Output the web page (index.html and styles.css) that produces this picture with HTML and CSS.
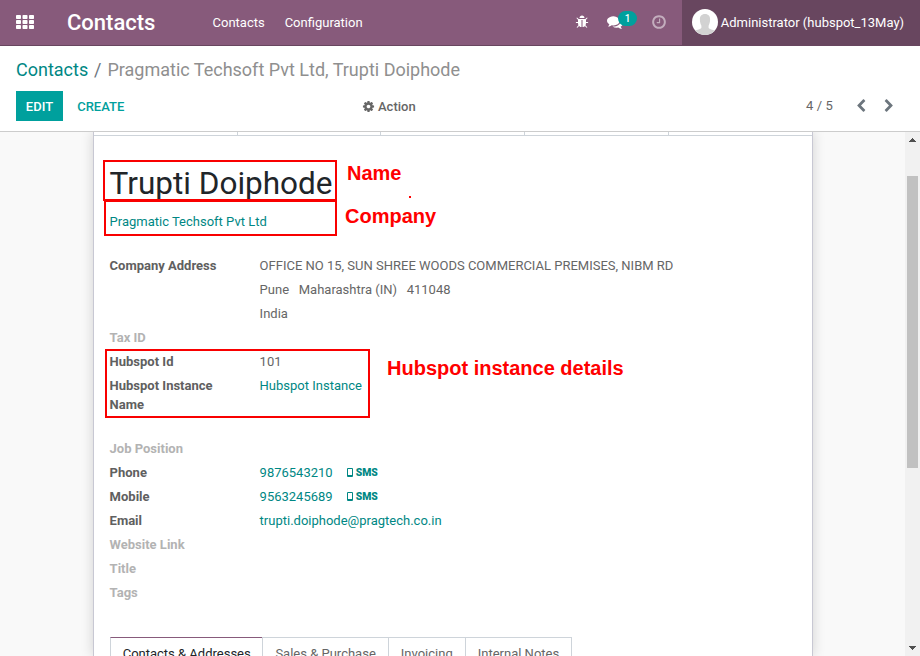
FILE: index.html
```html
<!DOCTYPE html>
<html lang="en">
<head>
<meta charset="utf-8">
<title>Contacts</title>
<link rel="stylesheet" href="styles.css">
</head>
<body>
<header class="navbar">
  <svg class="apps" viewBox="0 0 18 14"><g fill="#fff"><rect width="5" height="4" rx=".8"/><rect x="6.5" width="5" height="4" rx=".8"/><rect x="13" width="5" height="4" rx=".8"/><rect y="5" width="5" height="4" rx=".8"/><rect x="6.5" y="5" width="5" height="4" rx=".8"/><rect x="13" y="5" width="5" height="4" rx=".8"/><rect y="10" width="5" height="4" rx=".8"/><rect x="6.5" y="10" width="5" height="4" rx=".8"/><rect x="13" y="10" width="5" height="4" rx=".8"/></g></svg>
  <div class="brand">Contacts</div>
  <nav class="menu"><span>Contacts</span><span>Configuration</span></nav>
  <div class="systray">
    <svg class="bug" viewBox="0 0 1792 1792"><path d="M1696 960q0 26-19 45t-45 19h-224q0 171-67 290l208 209q19 19 19 45t-19 45q-18 19-45 19t-45-19l-198-197q-5 5-15 13t-42 28.500-65 36.500-82 29-97 13v-896h-128v896q-51 0-101.500-13.500t-87-33-66-39-43.500-32.500l-15-14-183 207q-20 21-48 21-24 0-43-16-19-18-20.500-44.500t15.500-46.500l202-227q-58-114-58-274h-224q-26 0-45-19t-19-45 19-45 45-19h224v-294l-173-173q-19-19-19-45t19-45 45-19 45 19l173 173h844l173-173q19-19 45-19t45 19 19 45-19 45l-173 173v294h224q26 0 45 19t19 45zm-480-576h-640q0-133 93.500-226.500t226.500-93.500 226.500 93.500 93.500 226.500z"/></svg>
    <div class="chat">
      <svg viewBox="0 0 1792 1792"><path d="M1408 768q0 139-94 257t-256.500 186.500-353.500 68.500q-86 0-176-16-124 88-278 128-36 9-86 16h-3q-11 0-20.500-8t-11.500-21q-1-3-1-6.500t.5-6.500 2-6l2.500-5 3.500-5.500 4-5 4.500-5 4-4.500q5-6 23-25t26-29.500 22.500-29 25-38.500 20.500-44q-124-72-195-177t-71-224q0-139 94-257t256.500-186.500 353.500-68.500 353.500 68.500 256.500 186.500 94 257zm384 256q0 120-71 224.500t-195 176.500q10 24 20.500 44t25 38.500 22.500 29 26 29.500 23 25q1 1 4 4.500t4.500 5 4 5 3.500 5.500l2.500 5 2 6 .5 6.500-1 6.500q-3 14-13 22t-22 7q-50-7-86-16-154-40-278-128-90 16-176 16-271 0-472-132 58 4 88 4 161 0 309-45t264-129q125-92 192-212t67-254q0-77-23-152 129 71 204 178t75 230z"/></svg>
      <span class="badge">1</span>
    </div>
    <svg class="clock" viewBox="0 0 1792 1792"><path d="M1024 544v448q0 14-9 23t-23 9h-320q-14 0-23-9t-9-23v-64q0-14 9-23t23-9h224v-352q0-14 9-23t23-9h64q14 0 23 9t9 23zm416 352q0-148-73-273t-198-198-273-73-273 73-198 198-73 273 73 273 198 198 273 73 273-73 198-198 73-273zm224 0q0 209-103 385.500t-279.500 279.500-385.500 103-385.500-103-279.500-279.500-103-385.500 103-385.500 279.500-279.500 385.500-103 385.500 103 279.500 279.500 103 385.500z"/></svg>
  </div>
  <div class="user">
    <svg class="avatar" viewBox="0 0 26 26"><defs><clipPath id="round"><circle cx="13" cy="13" r="13"/></clipPath></defs><g clip-path="url(#round)"><rect width="26" height="26" fill="#fff"/><path fill="#d2d2d2" d="M13 5c3.500 0 5.200 2.300 5.100 5.500 0 2.700-.8 4.800-1.500 6.200v2c0 1.600 6.400 2 7.900 4.300V26H1.500v-3c1.500-2.300 7.900-2.700 7.900-4.300v-2c-.8-1.400-1.500-3.500-1.500-6.200C7.800 7.300 9.500 5 13 5z"/></g></svg>
    <span>Administrator (hubspot_13May)</span>
  </div>
</header>
<section class="panel">
  <div class="crumbs"><span class="link">Contacts</span><span class="slash">/</span><span class="current">Pragmatic Techsoft Pvt Ltd, Trupti Doiphode</span></div>
  <div class="toolbar">
    <div class="buttons"><span class="edit">EDIT</span><span class="create">CREATE</span></div>
    <div class="action"><svg viewBox="0 0 1792 1792"><path d="M1152 896q0-106-75-181t-181-75-181 75-75 181 75 181 181 75 181-75 75-181zm512-109v222q0 12-8 23t-20 13l-185 28q-19 54-39 91 35 50 107 138 10 12 10 25t-9 23q-27 37-99 108t-94 71q-12 0-26-9l-138-108q-44 23-91 38-16 136-29 186-7 28-36 28h-222q-14 0-24.500-8.500t-11.500-21.500l-28-184q-49-16-90-37l-141 107q-10 9-25 9-14 0-25-11-126-114-165-168-7-10-7-23 0-12 8-23 15-21 51-66.500t54-70.500q-27-50-41-99l-183-27q-13-2-21-12.500t-8-23.500v-222q0-12 8-23t19-13l186-28q14-46 39-92-40-57-107-138-10-12-10-24 0-10 9-23 26-36 98.500-107.500t94.500-71.500q13 0 26 10l138 107q44-23 91-38 16-136 29-186 7-28 36-28h222q14 0 24.500 8.500t11.500 21.500l28 184q49 16 90 37l142-107q9-9 24-9 13 0 25 10 129 119 165 170 7 8 7 22 0 12-8 23-15 21-51 66.500t-54 70.500q26 50 41 98l183 28q13 2 21 12.500t8 23.500z"/></svg><span>Action</span></div>
    <div class="pager"><span class="count">4 / 5</span>
      <svg class="chev" viewBox="0 0 1792 1792"><path d="M1427 301l-531 531 531 531q19 19 19 45t-19 45l-166 166q-19 19-45 19t-45-19l-742-742q-19-19-19-45t19-45l742-742q19-19 45-19t45 19l166 166q19 19 19 45t-19 45z"/></svg>
      <svg class="chev next" viewBox="0 0 1792 1792"><path d="M1427 301l-531 531 531 531q19 19 19 45t-19 45l-166 166q-19 19-45 19t-45-19l-742-742q-19-19-19-45t19-45l742-742q19-19 45-19t45 19l166 166q19 19 19 45t-19 45z"/></svg>
    </div>
  </div>
</section>
<main class="content">
  <article class="sheet">
    <div class="statbar"><i></i><i></i><i></i><i></i><i></i></div>
    <div class="body">
      <h1>Trupti Doiphode</h1>
      <div class="company link">Pragmatic Techsoft Pvt Ltd</div>
      <dl class="group">
        <dt>Company Address</dt><dd>OFFICE NO 15, SUN SHREE WOODS COMMERCIAL PREMISES, NIBM RD</dd>
        <dt></dt><dd class="city"><span>Pune</span><span>Maharashtra (IN)</span><span>411048</span></dd>
        <dt></dt><dd>India</dd>
        <dt class="empty">Tax ID</dt><dd></dd>
        <dt>Hubspot Id</dt><dd>101</dd>
        <dt class="tall">Hubspot Instance Name</dt><dd class="link">Hubspot Instance</dd>
      </dl>
      <dl class="group second">
        <dt class="empty">Job Position</dt><dd></dd>
        <dt>Phone</dt><dd class="link">9876543210<span class="sms"><i></i><b>SMS</b></span></dd>
        <dt>Mobile</dt><dd class="link">9563245689<span class="sms"><i></i><b>SMS</b></span></dd>
        <dt>Email</dt><dd class="link">trupti.doiphode@pragtech.co.in</dd>
        <dt class="empty">Website Link</dt><dd></dd>
        <dt class="empty">Title</dt><dd></dd>
        <dt class="empty">Tags</dt><dd></dd>
      </dl>
      <div class="tabs"><span class="active">Contacts &amp; Addresses</span><span>Sales &amp; Purchase</span><span>Invoicing</span><span>Internal Notes</span></div>
    </div>
  </article>
  <div class="scrollbar"><svg viewBox="0 0 7 4"><path d="M3 0h1v1h1v1h1v1h1v1H0V3h1V2h1V1h1z"/></svg><div class="thumb"></div><svg class="down" viewBox="0 0 7 4"><path d="M3 0h1v1h1v1h1v1h1v1H0V3h1V2h1V1h1z"/></svg></div>
  <div class="box box-name"></div>
  <div class="box box-company"></div>
  <div class="box box-hubspot"></div>
  <div class="note note-name">Name</div>
  <div class="note note-company">Company</div>
  <div class="note note-hubspot">Hubspot instance details</div>
  <div class="dot"></div>
</main>
</body>
</html>
```
FILE: styles.css
```css
* { box-sizing: border-box; }
body { margin: 0; width: 920px; height: 656px; overflow: hidden; display: flex; flex-direction: column; background: #fff; color: #666; font: 13px/19.5px Roboto, "Liberation Sans", sans-serif; }
svg { display: block; flex: none; fill: currentColor; }
.link { color: #008784; }
.navbar { height: 46px; flex: none; display: flex; align-items: center; background: #875a7b; border-bottom: 1px solid #68465f; color: #fff; }
.apps { width: 18px; height: 14px; margin-left: 16px; margin-top: -1px; }
.brand { width: 145.500px; margin-left: 33px; font-size: 22px; line-height: 44px; font-weight: 500; }
.menu { display: flex; gap: 20px; }
.systray { flex: 1; display: flex; align-items: center; justify-content: flex-end; }
.bug { width: 14px; height: 14px; margin-right: 18.500px; margin-top: -1px; }
.chat { position: relative; width: 44px; margin-top: -1px; }
.chat svg { width: 16px; height: 16px; }
.badge { position: absolute; left: 11px; top: -3px; width: 19px; height: 15px; border-radius: 8px; background: #00a09d; font-size: 10px; line-height: 15px; font-weight: 500; text-align: center; }
.clock { width: 16px; height: 16px; margin-right: 15px; margin-top: -1px; opacity: .5; }
.user { width: 238px; height: 46px; align-self: flex-start; display: flex; align-items: center; padding: 0 0 2px 10px; gap: 2.800px; background: #68465f; white-space: nowrap; }
.user span { padding-top: 2px; }
.avatar { width: 26px; height: 26px; }
.panel { height: 86px; flex: none; padding: 10px 16px 0; border-bottom: 1px solid #ccc; }
.crumbs { display: flex; font-size: 18px; line-height: 27px; color: #6c757d; white-space: nowrap; }
.slash { margin: 0 6px 0 5.800px; }
.current { color: #8f8f8f; }
.toolbar { display: flex; align-items: center; height: 30px; margin-top: 8px; }
.buttons { width: 346px; display: flex; line-height: 31px; font-weight: 500; }
.edit { width: 47px; height: 30px; text-align: center; background: #00a09d; color: #fff; }
.create { height: 30px; margin-left: 14.200px; color: #00a09d; }
.action { flex: 1; display: flex; align-items: center; gap: 3px; font-weight: 500; }
.action span { padding-top: 1px; }
.action svg { width: 13px; height: 13px; }
.pager { display: flex; align-items: center; }
.count { width: 48px; letter-spacing: .1px; margin-top: -1px; }
.chev { width: 14px; height: 14px; margin-right: 14px; color: #6c757d; }
.next { transform: scaleX(-1); margin-right: 8px; }
.content { position: relative; flex: 1; min-height: 0; display: flex; background: #f9f9f9; }
.sheet { width: 720px; margin-left: 93px; background: #fff; border: solid #c8c8d3; border-width: 0 1px; box-shadow: 0 0 12px rgba(0,0,0,.16); clip-path: inset(0 -20px); }
.statbar { display: grid; grid-template-columns: repeat(5, 143.700px); height: 4px; overflow: hidden; border-bottom: 1px solid #ced4da; }
.statbar i { border-right: 1px solid #ced4da; }
.statbar i:last-child { border: 0; }
.body { padding: 27px 16px 0 15.600px; }
h1 { margin: 0; color: #212529; font-size: 31.500px; line-height: 42px; font-weight: 400; white-space: nowrap; }
.company { margin-top: 6.500px; }
.group { display: grid; grid-template-columns: 150px 1fr; grid-auto-rows: minmax(24px, auto); margin: 24.500px 0 0; }
dt { font-weight: 700; width: 125px; line-height: 19px; color: #606060; }
.empty { color: #b3b3b3; }
dd { margin: 0; white-space: nowrap; line-height: 19px; }
.city span { margin-right: 9.700px; }
.tall { height: 43px; }
.second { margin-top: 20px; }
.sms { display: inline-flex; align-items: center; margin-left: 14px; gap: 3px; font-size: 10.400px; line-height: 14px; font-weight: 700; }
.sms b { position: relative; top: 1px; }
.sms i { width: 6px; height: 9px; border: 1px solid; border-bottom-width: 2px; border-radius: 1px; }
.tabs { display: flex; width: max-content; margin-left: .4px; margin-top: 30px; border-right: 1px solid #ced4da; }
.tabs span { height: 40px; padding: 6px 12px; border: solid #ced4da; border-width: 1px 0 0 1px; }
.tabs .active { padding: 6px 11.700px; border-top-color: #875a7b; color: #212529; }
.scrollbar { width: 15px; margin-left: auto; background: #f1f1f1; display: flex; flex-direction: column; align-items: center; color: #505050; padding: 6px 0; z-index: 1; }
.scrollbar svg { width: 7px; height: 4px; }
.thumb { width: 11px; height: 292px; margin-top: 34px; background: #c1c1c1; }
.down { margin-top: auto; transform: scaleY(-1); }
.box { position: absolute; border: 2px solid #f90000; }
.box-name { left: 103px; top: 28px; width: 234px; height: 41px; }
.box-company { left: 104px; top: 68px; width: 233px; height: 36px; }
.box-hubspot { left: 105px; top: 217px; width: 265px; height: 69px; }
.note { position: absolute; color: #f00; font: bold 20px/24px "Liberation Sans", Arial, sans-serif; white-space: nowrap; }
.note-name { left: 347px; top: 29px; }
.note-company { left: 345px; top: 72px; }
.note-hubspot { left: 387px; top: 224px; }
.dot { position: absolute; left: 409px; top: 64px; width: 2px; height: 2px; background: #f00; }
```
